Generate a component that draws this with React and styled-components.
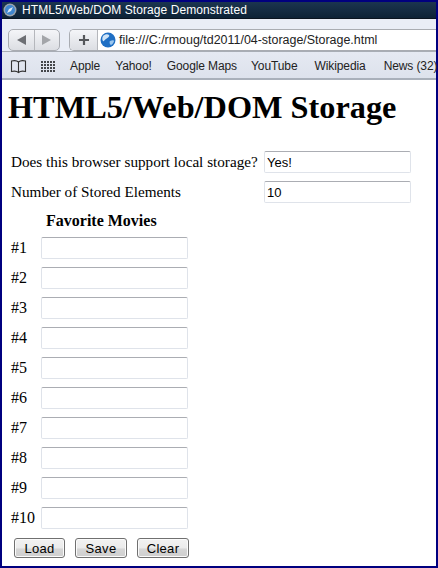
import styled, { createGlobalStyle } from "styled-components";

const Global = createGlobalStyle`
  html, body { margin: 0; padding: 0; background: #fff; }
  body { width: 438px; height: 568px; overflow: hidden; }
`;

const Frame = styled.div`
  box-sizing: border-box;
  width: 438px;
  height: 568px;
  border: 2px solid #00007f;
  display: flex;
  flex-direction: column;
  background: #fff;
`;

const TitleBar = styled.div`
  height: 17px;
  flex: none;
  box-sizing: border-box;
  display: flex;
  align-items: center;
  gap: 5px;
  padding-left: 1px;
  background: linear-gradient(#1b3550, #0d2236);
  border-bottom: 1px solid #0a1420;
  color: #fff;
  font: 12px "Liberation Sans", sans-serif;
  letter-spacing: 0.07px;
`;

const Icon = styled.svg`
  width: ${(p) => p.$size}px;
  height: ${(p) => p.$size}px;
  flex: none;
`;

const Toolbar = styled.div`
  height: 32px;
  flex: none;
  box-sizing: border-box;
  display: flex;
  align-items: flex-start;
  gap: 9px;
  padding: 10px 0 0 6px;
  background: #e9edf6;
`;

const NavGroup = styled.div`
  box-sizing: border-box;
  width: 52px;
  height: 22px;
  flex: none;
  display: flex;
  border: 1px solid #a9acb2;
  border-radius: 5px;
  background: linear-gradient(#f4f5f8, #dcdee3);
`;

const NavButton = styled.div`
  flex: 1;
  display: flex;
  align-items: center;
  justify-content: center;
  & + & { border-left: 1px solid #b5b7bc; }
`;

const Triangle = styled.span`
  width: 0;
  height: 0;
  border-top: 5px solid transparent;
  border-bottom: 5px solid transparent;
  ${(p) => (p.$left ? "border-right: 9px solid #6d6f74;" : "border-left: 9px solid #a3a5a9;")}
`;

const AddressBar = styled.div`
  flex: 1;
  box-sizing: border-box;
  height: 22px;
  display: flex;
  border: 1px solid #a9acb2;
  border-right: none;
  border-radius: 5px 0 0 5px;
  background: #fff;
  overflow: hidden;
`;

const AddButton = styled.div`
  width: 27px;
  flex: none;
  display: flex;
  align-items: center;
  justify-content: center;
  border-right: 1px solid #b5b7bc;
  background: linear-gradient(#f4f5f8, #dcdee3);
`;

const Url = styled.div`
  display: flex;
  align-items: center;
  gap: 3px;
  padding-left: 2px;
  font: 12.45px "Liberation Sans", sans-serif;
  color: #222;
  white-space: nowrap;
`;

const BookmarkBar = styled.div`
  height: 29px;
  flex: none;
  box-sizing: border-box;
  display: flex;
  align-items: center;
  padding: 2px 0 0 8px;
  background: linear-gradient(#e5e9f2, #dde2ec);
  border-top: 1px solid #a8adb5;
  border-bottom: 2px solid #a9b0ba;
  font: 12px "Liberation Sans", sans-serif;
  letter-spacing: -0.1px;
  color: #222;
`;

const AppsGrid = styled.div`
  display: grid;
  flex: none;
  grid-template-columns: repeat(5, 2px);
  grid-auto-rows: 2px;
  gap: 1px;
  margin: 0 15px 0 14px;
`;

const AppsDot = styled.i`
  background: #45474b;
`;

const Bookmark = styled.span`
  margin-right: ${(p) => p.$gap}px;
  white-space: nowrap;
`;

const Page = styled.div`
  flex: 1;
  padding: 0 6px;
  font: 16px "Liberation Serif", serif;
  color: #000;
`;

const Heading = styled.h1`
  margin: 9px 0 25px;
  font: bold 32.3px/37px "Liberation Serif", serif;
`;

const InfoRow = styled.div`
  display: flex;
  align-items: center;
  height: 22px;
  margin: 0 0 8px 3px;
  font-size: 15.2px;
`;

const InfoLabel = styled.span`
  width: 253px;
  flex: none;
  white-space: nowrap;
`;

const Field = styled.input`
  box-sizing: border-box;
  width: ${(p) => p.$width}px;
  height: 22px;
  padding: 0 2px;
  margin: 0;
  background: #fff;
  border: 1px solid #dfe3ea;
  border-top-color: #abadb3;
  border-radius: 2px;
  font: 13px "Liberation Sans", sans-serif;
  color: #000;
  outline: none;
`;

const MovieTitle = styled.div`
  font-weight: bold;
  margin: 9px 0 7px 38px;
  line-height: 18px;
`;

const MovieList = styled.div`
  display: flex;
  flex-direction: column;
  gap: 8px;
  margin-left: 3px;
`;

const MovieRow = styled.div`
  display: flex;
  align-items: center;
  height: 22px;
`;

const MovieLabel = styled.span`
  width: 30px;
  flex: none;
`;

const Actions = styled.div`
  display: flex;
  gap: 10px;
  margin: 9px 0 0 6px;
`;

const ActionButton = styled.button`
  box-sizing: border-box;
  width: ${(p) => p.$width}px;
  height: 20px;
  padding: 0;
  border: 1px solid #707070;
  border-radius: 3px;
  background: linear-gradient(#f2f2f2 0, #ebebeb 50%, #d6d6d6 55%, #cfcfcf 100%);
  box-shadow: inset 0 0 0 1px #fbfbfb;
  font: 13px "Liberation Sans", sans-serif;
  letter-spacing: 0.3px;
  color: #000;
`;

const bookmarks = [
  ["Apple", 15],
  ["Yahoo!", 15],
  ["Google Maps", 14],
  ["YouTube", 17],
  ["Wikipedia", 18],
  ["News (32)", 0],
];

const movies = ["#1", "#2", "#3", "#4", "#5", "#6", "#7", "#8", "#9", "#10"];

function CompassIcon() {
  return (
    <Icon $size={14} viewBox="0 0 14 14">
      <circle cx="7" cy="7" r="6.5" fill="#9aa3ad" />
      <circle cx="7" cy="7" r="5" fill="#3f86cf" />
      <path d="M4 10l2-4 4-2-2 4z" fill="#dfe9f3" />
    </Icon>
  );
}

function GlobeIcon() {
  return (
    <Icon $size={16} viewBox="0 0 16 16">
      <circle cx="8" cy="8" r="7.5" fill="#1f6fc4" />
      <path d="M3 4c2-2 5-2 6-1s-1 3-3 4-2 3-3 2-1-3 0-5z" fill="#cfe4f7" />
      <path d="M10 9c2-1 4-1 4 0s-2 4-3 4-2-3-1-4z" fill="#9cc7ee" />
    </Icon>
  );
}

function BookIcon() {
  return (
    <Icon $size={17} viewBox="0 0 17 17">
      <path
        d="M8.5 4C7 2.6 4 2.4 1.5 3v10.5c2.5-.6 5.5-.3 7 1 1.5-1.3 4.5-1.6 7-1V3C13 2.4 10 2.6 8.5 4zM8.5 4v10.5"
        fill="none"
        stroke="#333"
        strokeWidth="1.1"
      />
    </Icon>
  );
}

function PlusIcon() {
  return (
    <Icon $size={12} viewBox="0 0 12 12">
      <path d="M6 1v10M1 6h10" stroke="#55575b" strokeWidth="2.2" />
    </Icon>
  );
}

export default function App() {
  return (
    <>
      <Global />
      <Frame>
        <TitleBar>
          <CompassIcon />
          HTML5/Web/DOM Storage Demonstrated
        </TitleBar>
        <Toolbar>
          <NavGroup>
            <NavButton><Triangle $left /></NavButton>
            <NavButton><Triangle /></NavButton>
          </NavGroup>
          <AddressBar>
            <AddButton><PlusIcon /></AddButton>
            <Url>
              <GlobeIcon />
              file:///C:/rmoug/td2011/04-storage/Storage.html
            </Url>
          </AddressBar>
        </Toolbar>
        <BookmarkBar>
          <BookIcon />
          <AppsGrid>
            {Array.from({ length: 20 }, (_, i) => <AppsDot key={i} />)}
          </AppsGrid>
          {bookmarks.map(([name, gap]) => (
            <Bookmark key={name} $gap={gap}>{name}</Bookmark>
          ))}
        </BookmarkBar>
        <Page>
          <Heading>HTML5/Web/DOM Storage</Heading>
          <InfoRow>
            <InfoLabel>Does this browser support local storage?</InfoLabel>
            <Field $width={147} defaultValue="Yes!" />
          </InfoRow>
          <InfoRow>
            <InfoLabel>Number of Stored Elements</InfoLabel>
            <Field $width={147} defaultValue="10" />
          </InfoRow>
          <MovieTitle>Favorite Movies</MovieTitle>
          <MovieList>
            {movies.map((m) => (
              <MovieRow key={m}>
                <MovieLabel>{m}</MovieLabel>
                <Field $width={147} />
              </MovieRow>
            ))}
          </MovieList>
          <Actions>
            <ActionButton $width={51}>Load</ActionButton>
            <ActionButton $width={52}>Save</ActionButton>
            <ActionButton $width={52}>Clear</ActionButton>
          </Actions>
        </Page>
      </Frame>
    </>
  );
}
